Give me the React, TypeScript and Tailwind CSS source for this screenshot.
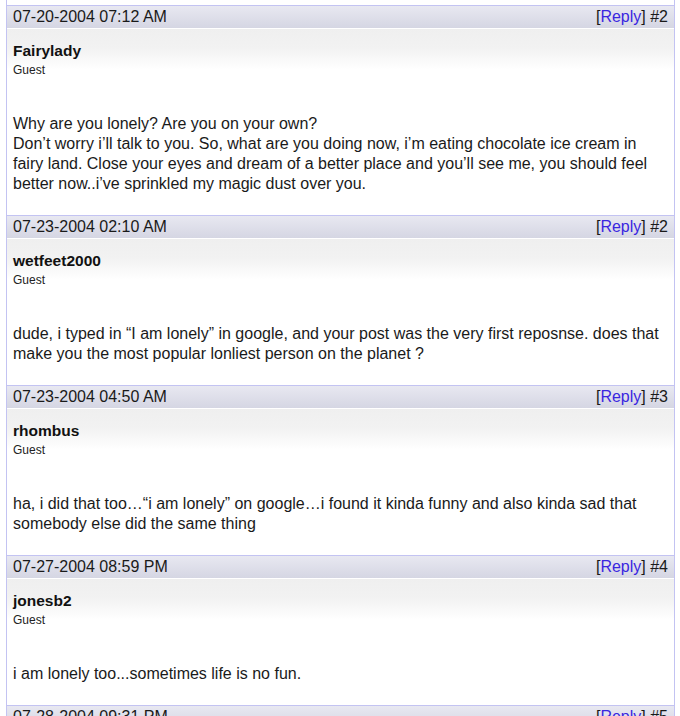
const posts = [
  {
    date: '07-20-2004 07:12 AM',
    num: 2,
    name: 'Fairylady',
    lines: [
      'Why are you lonely? Are you on your own?',
      'Don’t worry i’ll talk to you. So, what are you doing now, i’m eating chocolate ice cream in fairy land. Close your eyes and dream of a better place and you’ll see me, you should feel better now..i’ve sprinkled my magic dust over you.',
    ],
  },
  {
    date: '07-23-2004 02:10 AM',
    num: 2,
    name: 'wetfeet2000',
    lines: [
      'dude, i typed in “I am lonely” in google, and your post was the very first reposnse. does that make you the most popular lonliest person on the planet ?',
    ],
  },
  {
    date: '07-23-2004 04:50 AM',
    num: 3,
    name: 'rhombus',
    lines: [
      'ha, i did that too…“i am lonely” on google…i found it kinda funny and also kinda sad that somebody else did the same thing',
    ],
  },
  {
    date: '07-27-2004 08:59 PM',
    num: 4,
    name: 'jonesb2',
    lines: ['i am lonely too...sometimes life is no fun.'],
  },
  {
    date: '07-28-2004 09:31 PM',
    num: 5,
    name: 'Guest',
    lines: [''],
  },
];

function Post({ post }: { post: (typeof posts)[number] }) {
  return (
    <div className="border-t border-[#c3c3f2]">
      {/* header bar */}
      <div className="flex h-[22px] items-center justify-between bg-[linear-gradient(#e8e8f1,#d5d6e3)] px-[6px] text-[16px] leading-[22px] text-[#1a1a1a]">
        <span>{post.date}</span>
        <span>
          [<a className="text-[#3a26e0]">Reply</a>] #{post.num}
        </span>
      </div>
      <div className="h-px bg-white" />
      <div className="bg-[linear-gradient(#efefef,#f2f2f2_40%,#ffffff_85%)] px-[6px] pt-[13px]">
        <div className="text-[15.5px] font-bold leading-[18px] text-[#111]">{post.name}</div>
        <div className="mt-[3px] text-[12px] leading-[14px] text-[#222]">Guest</div>
      </div>
      <div className="px-[6px] pt-[37px] pb-[21px] text-[16px] leading-[20px] text-[#1a1a1a]">
        {post.lines.map((l, i) => (
          <div key={i}>{l}</div>
        ))}
      </div>
    </div>
  );
}

export default function App() {
  return (
    <div className="h-[716px] overflow-hidden bg-white font-['Liberation_Sans',Arial,sans-serif]">
      <div className="ml-[6px] w-[669px] border-x border-[#c3c3f2]">
        <div className="h-[5px]" />
        {posts.map((p, i) => (
          <Post key={i} post={p} />
        ))}
      </div>
    </div>
  );
}
